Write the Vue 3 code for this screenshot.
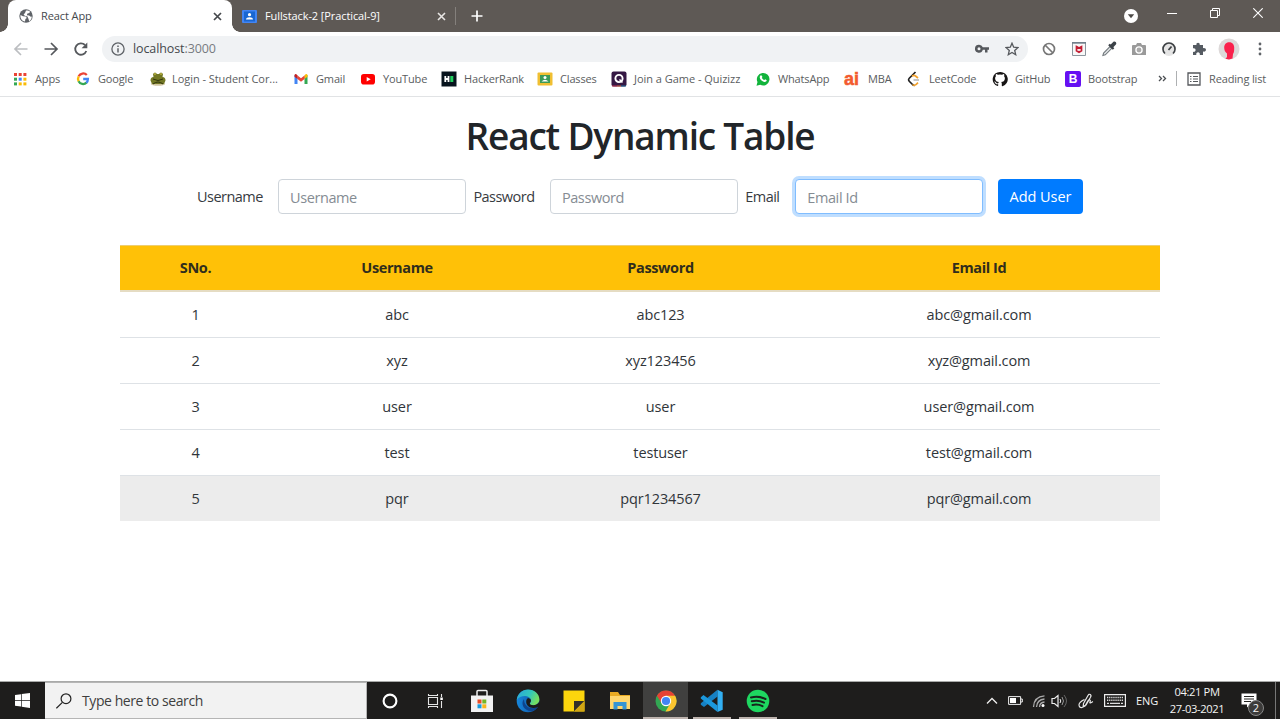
<script setup>
const columns = ['SNo.', 'Username', 'Password', 'Email Id']
const users = [
  ['1', 'abc', 'abc123', 'abc@gmail.com'],
  ['2', 'xyz', 'xyz123456', 'xyz@gmail.com'],
  ['3', 'user', 'user', 'user@gmail.com'],
  ['4', 'test', 'testuser', 'test@gmail.com'],
  ['5', 'pqr', 'pqr1234567', 'pqr@gmail.com']
]
const appDots = ['#ea4335', '#ea4335', '#ea4335', '#34a853', '#4285f4', '#fbbc05', '#34a853', '#fbbc05', '#fbbc05']
</script>

<template>
  <div class="screen">
    <header class="tabs">
      <div class="tab active">
        <svg class="fav" width="14" height="14" viewBox="0 0 14 14"><circle cx="7" cy="7" r="6.700" fill="#5f6368" /><path d="M1.500 6 4 7.200l2.800.2 1 1.600-1.400 1-.4 2.500C3 12.300.9 9 1.500 6zM7 1.500l2-.1 2 1.200-.6 1.500-2 .5-.6 1.600 2.300.2 1.600 1.400 1-.3c.2 2-1 4-2.500 4.700L9.500 10 8.500 7.500 5.800 6.800 4.600 5.400 6 4z" fill="#fff" /></svg>
        <span class="tab-title">React App</span>
        <svg class="close" width="9" height="9" viewBox="0 0 9 9"><path d="M1 1l7 7M8 1l-7 7" stroke="#45484c" stroke-width="1.700" /></svg>
      </div>
      <div class="tab idle">
        <svg class="fav2" width="15" height="13" viewBox="0 0 15 13"><rect width="15" height="13" rx="1" fill="#4285f4" /><rect x="2" y="1.500" width="11" height="10" fill="#1967d2" /><circle cx="7.500" cy="4.700" r="1.600" fill="#fff" /><path d="M4 9.500c0-3 7-3 7 0z" fill="#fff" /></svg>
        <span class="tab-title second">Fullstack-2 [Practical-9]</span>
        <svg class="close" width="9" height="9" viewBox="0 0 9 9"><path d="M1 1l7 7M8 1l-7 7" stroke="#e8e6e4" stroke-width="1.600" /></svg>
      </div>
      <svg class="plus" width="12" height="12" viewBox="0 0 12 12"><path d="M6 .5v11M.5 6h11" stroke="#fff" stroke-width="1.700" /></svg>
      <div class="window-controls">
        <svg width="14" height="14" viewBox="0 0 14 14"><circle cx="7" cy="7" r="7" fill="#fff" /><path d="M3.800 5.200h6.400L7 9.200z" fill="#4d4a47" /></svg>
        <svg class="wc" width="10" height="10" viewBox="0 0 10 10"><path d="M0 5.500h10" stroke="#fff" /></svg>
        <svg class="wc" width="10" height="10" viewBox="0 0 10 10"><path d="M.5 2.500h7v7h-7zM2.500 2.500v-2h7v7h-2" fill="none" stroke="#fff" /></svg>
        <svg class="wc" width="10" height="10" viewBox="0 0 10 10"><path d="M.3.300l9.400 9.400M9.700.300.300 9.700" stroke="#fff" stroke-width="1.100" /></svg>
      </div>
    </header>

    <nav class="toolbar">
      <svg width="16" height="16" viewBox="0 0 16 16" fill="none" stroke="#bcbec1" stroke-width="1.700"><path d="M14.500 8H2.500M8 2 2 8l6 6" /></svg>
      <svg width="16" height="16" viewBox="0 0 16 16" fill="none" stroke="#55585c" stroke-width="1.700"><path d="M1.500 8h12M8 2l6 6-6 6" /></svg>
      <svg width="16" height="16" viewBox="0 0 16 16"><path d="M13.300 10A5.700 5.700 0 1 1 12 4" fill="none" stroke="#55585c" stroke-width="1.800" /><path d="M14.300 1.500v5.700H8.600z" fill="#55585c" /></svg>
      <div class="address">
        <svg width="14" height="14" viewBox="0 0 14 14"><circle cx="7" cy="7" r="6.100" fill="none" stroke="#5f6368" stroke-width="1.300" /><path d="M7 6.200v4.200M7 3.400v1.500" stroke="#5f6368" stroke-width="1.500" /></svg>
        <span class="url">localhost<span class="port">:3000</span></span>
        <svg class="key" width="14" height="10" viewBox="0 0 14 10"><path d="M4 .8a4 4 0 1 0 3.800 5H10v2.700h2.500V5.800H14V3.300H7.800A4 4 0 0 0 4 .8zm0 2.500a1.500 1.500 0 1 1 0 3 1.500 1.500 0 0 1 0-3z" fill="#55585c" /></svg>
        <svg class="star" width="14" height="14" viewBox="0 0 14 14"><path d="m7 1.200 1.700 4 4.300.4-3.300 2.900 1 4.200L7 10.500l-3.700 2.200 1-4.200L1 5.600l4.300-.4z" fill="none" stroke="#55585c" stroke-width="1.300" /></svg>
      </div>
      <div class="extensions">
        <svg width="16" height="16" viewBox="0 0 16 16"><circle cx="8" cy="8" r="5.500" fill="none" stroke="#777" stroke-width="1.700" /><path d="m4 4 8 8" stroke="#777" stroke-width="1.700" /></svg>
        <svg width="16" height="16" viewBox="0 0 16 16"><path d="M1.500 1.500h13v13h-13z" fill="#f8f8f8" stroke="#8c969e" /><path d="M1 1h14v1.700H1z" fill="#71808b" /><path d="M5.500 5.600 8 7l2.500-1.400v4.200L8 11.200 5.500 9.800z" fill="#f7e6e8" stroke="#c31d33" stroke-width="1.700" /></svg>
        <svg width="16" height="16" viewBox="0 0 16 16"><path d="m9 5.500 1.800 1.800-6.500 6.500-2.400.7.700-2.500z" fill="#e3e6e8" stroke="#737a7e" stroke-width="1.100" /><path d="m7.200 4.200 1.500-1.500 1 .9L12.200 1C14-.4 16.200 1.800 14.900 3.600L12.300 6.200l1 1-1.500 1.500z" fill="#3c4248" /></svg>
        <svg width="16" height="16" viewBox="0 0 16 16"><path d="M2 4h3l1-2h4l1 2h3q1 0 1 1v9H1V5q0-1 1-1z" fill="#9a9a9a" /><circle cx="8" cy="9" r="3.100" fill="#aaa" stroke="#fff" stroke-width="1.300" /></svg>
        <svg width="16" height="16" viewBox="0 0 16 16"><circle cx="8" cy="8" r="7" fill="#e5e5e5" /><path d="M4 12.500a6 6 0 1 1 8 0" fill="none" stroke="#3d4144" stroke-width="1.600" /><path d="m7.500 9 3-3.500" stroke="#3d4144" stroke-width="1.700" /></svg>
        <svg width="16" height="16" viewBox="0 0 16 16"><path d="M2 4h3.500C4.600 1 9.400 1 8.700 4H12v3.200c4-1 4 4.400 0 3.400V14H8.800c.8-3.600-4.300-3.600-3.500 0H2v-3.200c3.500.8 3.500-4.300 0-3.500z" fill="#555b62" /></svg>
        <svg class="avatar" width="22" height="22" viewBox="0 0 22 22"><circle cx="11" cy="11" r="10.500" fill="#ddd9d9" /><path d="M6.200 9.500c0-7 10-7 10 0 0 3 0 5-1.200 6.500l-.5 4.500L11 21.500l-3.500-.8L9 19v-3.500C7 14 6.200 12 6.200 9.500z" fill="#fa214c" /></svg>
        <svg width="4" height="14" viewBox="0 0 4 14" fill="#5f6368"><circle cx="2" cy="2" r="1.400" /><circle cx="2" cy="7" r="1.400" /><circle cx="2" cy="12" r="1.400" /></svg>
      </div>
    </nav>

    <nav class="bookmarks">
      <div class="bm"><svg width="16" height="16" viewBox="0 0 16 16"><rect v-for="(c, i) in appDots" :key="i" :x="2 + (i % 3) * 4.700" :y="2 + Math.floor(i / 3) * 4.700" width="3" height="3" :fill="c" /></svg><span>Apps</span></div>
      <div class="bm"><svg width="16" height="16" viewBox="0 0 16 16" fill="none" stroke-width="2.300"><path d="M11.800 4A5 5 0 0 0 3.700 5.300" stroke="#ea4335" /><path d="M3.700 5.300a5 5 0 0 0 0 5" stroke="#fbbc05" /><path d="M3.600 10.300A5 5 0 0 0 11.500 11.700" stroke="#34a853" /><path d="M8.200 8h4.700q0 2.500-1.600 3.900" stroke="#4285f4" /></svg><span>Google</span></div>
      <div class="bm"><svg width="16" height="16" viewBox="0 0 16 16"><ellipse cx="8" cy="13" rx="7" ry="1.700" fill="#d0c5a0" /><path d="M3 3q2-3 4 0h2q2-3 4 0l-.5 3q3 0 3 3.500L14 13H2L.5 9.500Q.5 6 3.500 6z" fill="#727724" /><path d="M3 8q5 3 10 0M3 13q5-4 10 0" stroke="#30330f" fill="none" /><circle cx="5" cy="3" r=".8" fill="#e8d950" /><circle cx="11" cy="3" r=".8" fill="#e8d950" /></svg><span class="login">Login - Student Cor...</span></div>
      <div class="bm"><svg width="16" height="16" viewBox="0 0 16 16"><path d="M1.500 4v9H4.500V5.500z" fill="#4285f4" /><path d="M11.500 5.500V13h3V4z" fill="#34a853" /><path d="M11.500 4.500V8l3-2.200V4q-1-2-3 .500z" fill="#fbbc05" /><path d="m4.500 4.500 3.500 2.700 3.500-2.700V8L8 10.700 4.500 8z" fill="#ea4335" /><path d="M1.500 4q1-2 3 .500V8l-3-2.200z" fill="#c5221f" /></svg><span>Gmail</span></div>
      <div class="bm"><svg width="16" height="16" viewBox="0 0 16 16"><rect x="1" y="3" width="14" height="10.500" rx="2.800" fill="#f00" /><path d="m6.700 5.900 4 2.300-4 2.300z" fill="#fff" /></svg><span>YouTube</span></div>
      <div class="bm"><svg width="16" height="16" viewBox="0 0 16 16"><path d="M.5.500h15v15H.5z" fill="#07131d" /><path d="M4.300 5v6M7.500 5v6M4 8h4" stroke="#fff" stroke-width="1.800" /><path d="M9.300 5h3v6h-3z" fill="#1fd15e" /></svg><span>HackerRank</span></div>
      <div class="bm"><svg width="16" height="16" viewBox="0 0 16 16"><rect x=".5" y="1.500" width="15" height="13" rx="1" fill="#f0bf32" /><path d="M3 4h10v8H3z" fill="#3c9a58" /><circle cx="8" cy="6.500" r="1.500" fill="#fff" /><path d="M4.500 10.500q3.500-3.500 7 0z" fill="#fff" /></svg><span>Classes</span></div>
      <div class="bm"><svg width="16" height="16" viewBox="0 0 16 16"><rect x=".5" y=".5" width="15" height="15" rx="2" fill="#351844" /><circle cx="8" cy="7.500" r="3.600" fill="none" stroke="#fff" stroke-width="1.900" /><path d="m8.500 8.500 3 3" stroke="#fff" stroke-width="1.500" /><path d="M1 15h5" stroke="#bf3556" /><path d="M6 15h4" stroke="#d5623d" /><path d="M10 15h5" stroke="#236f9d" /></svg><span class="quiz">Join a Game - Quizizz</span></div>
      <div class="bm"><svg width="16" height="16" viewBox="0 0 16 16"><path d="M1.500 14.800 2.500 11A6.300 6.300 0 1 1 5.200 13.800z" fill="#12b43c" /><path d="M5 5q1-1.600 2 0l.4 1.100-.6 1q1 1.500 2.600 2l.8-.8 1.600.9q-.3 2-2.500 1.800Q5 9.800 4.700 6.300z" fill="#fff" /></svg><span>WhatsApp</span></div>
      <div class="bm"><span class="ai">ai</span><span>MBA</span></div>
      <div class="bm"><svg width="16" height="16" viewBox="0 0 16 16" fill="none" stroke-width="1.700"><path d="M9.500 1 3.500 7q-1.800 1.800 0 3.500l3 3q1 .9 2 .8" stroke="#222" /><path d="m6.500 13.500q1.700 1.700 3.500 0l2-1.800M6 5.200q2-1.400 3.500-.2l2.500 2" stroke="#f3a22d" /><path d="M7.500 9H13" stroke="#bbb" /></svg><span>LeetCode</span></div>
      <div class="bm"><svg width="16" height="16" viewBox="0 0 16 16"><path d="M8 .9a7.300 7.300 0 0 0-2.400 14.200c.5.100.6-.2.600-.5v-1.400c-2.200.5-2.700-.8-2.700-.8-.4-1-.9-1.200-.9-1.200-.8-.6.100-.6.100-.6.900.1 1.300.9 1.300.9.800 1.200 2 .9 2.300.7q.1-.7.600-1.100c-1.900-.2-3.800-1-3.800-3.900q0-1.200.8-2-.4-1 .1-2.200s.7-.2 2.100.8a7 7 0 0 1 3.800 0c1.500-1 2.100-.8 2.100-.8q.5 1.200.1 2.200.8.800.8 2c0 2.900-1.900 3.700-3.700 3.900.4.300.6.900.6 1.600v2c0 .3.200.6.700.5A7.300 7.300 0 0 0 8 .9z" fill="#171515" /></svg><span>GitHub</span></div>
      <div class="bm"><span class="bs">B</span><span>Bootstrap</span></div>
      <svg class="more" width="9" height="7" viewBox="0 0 9 7" fill="none" stroke="#4b4e52" stroke-width="1.300"><path d="m1 1 2.500 2.500L1 6M5 1l2.500 2.500L5 6" /></svg>
      <div class="reading">
        <svg width="14" height="14" viewBox="0 0 14 14"><path d="M1 1h12v12H1z" fill="none" stroke="#55585c" stroke-width="1.300" /><path d="M3 4.500h1.500M6 4.500h5M3 7h1.500M6 7h5M3 9.500h1.500M6 9.500h5" stroke="#55585c" stroke-width="1.200" /></svg>
        <span>Reading list</span>
      </div>
    </nav>

    <main>
      <h1>React Dynamic Table</h1>
      <form class="user-form" @submit.prevent>
        <label class="lu">Username</label><input placeholder="Username" />
        <label class="lp">Password</label><input placeholder="Password" />
        <label class="le">Email</label><input class="focused" placeholder="Email Id" />
        <button>Add User</button>
      </form>
      <table>
        <colgroup><col class="c1" /><col class="c2" /><col class="c3" /><col class="c4" /></colgroup>
        <thead><tr><th v-for="c in columns" :key="c">{{ c }}</th></tr></thead>
        <tbody>
          <tr v-for="u in users" :key="u[0]" :class="{ hovered: u[0] === '5' }"><td v-for="(v, i) in u" :key="i">{{ v }}</td></tr>
        </tbody>
      </table>
    </main>

    <footer class="taskbar">
      <div class="start"><svg width="15" height="15" viewBox="0 0 15 15" fill="#fff"><path d="M0 2 6 1.200V7H0zM6.700 1.100 15 0v7H6.700zM0 7.700h6v5.900l-6-.8zM6.700 7.700H15V15l-8.300-1.200z" /></svg></div>
      <div class="search">
        <svg width="16" height="16" viewBox="0 0 16 16" fill="none" stroke="#222" stroke-width="1.200"><circle cx="10" cy="5.700" r="4.900" /><path d="m6.400 9.300-6 6" /></svg>
        <span>Type here to search</span>
      </div>
      <div class="task"><svg width="16" height="16" viewBox="0 0 16 16"><circle cx="8" cy="8" r="6.400" fill="none" stroke="#fff" stroke-width="2.100" /></svg></div>
      <div class="task"><svg class="taskview" width="18" height="16" viewBox="0 0 18 16" fill="none" stroke="#e5e5e5" stroke-width="1.100"><path d="M2.500 4.500h9v7h-9zM2.500 1v1.500h9V1M2.500 15v-1.500h9V15M15.500 1v3M15.500 8v7" /><path d="M14.300 4.500h2.500V7h-2.500z" fill="#fff" stroke="none" /></svg></div>
      <div class="task"><svg width="24" height="26" viewBox="0 0 24 26"><path d="M7 8V3.500q0-1 1-1h8q1 0 1 1V8" fill="none" stroke="#eee" stroke-width="1.500" /><path d="M1 7.500h22V24H1z" fill="#f2f2f2" /><path d="M7.500 11.500h4v4h-4z" fill="#e84b25" /><path d="M12.300 11.500h4v4h-4z" fill="#72b626" /><path d="M7.500 16.300h4v4h-4z" fill="#159bde" /><path d="M12.300 16.300h4v4h-4z" fill="#f8b51c" /></svg></div>
      <div class="task">
        <svg width="24" height="24" viewBox="0 0 24 24"><defs><linearGradient id="edge-top" x1="0" x2="1" y1="0" y2=".4"><stop stop-color="#2aa4de" /><stop offset=".6" stop-color="#32c8bb" /><stop offset="1" stop-color="#75df61" /></linearGradient><linearGradient id="edge-body" x1="0" x2="1"><stop stop-color="#1687dc" /><stop offset="1" stop-color="#104d9c" /></linearGradient></defs><circle cx="12" cy="12" r="11.300" fill="url(#edge-body)" /><path d="M.8 11C1.300 4.800 6.300.6 12 .6c6.600 0 11.400 4.800 11.400 9.700 0 4-3.200 6.200-6.600 6.200-2.500 0-3.800-1.100-2.700-2.300 2.700-3.300-.5-7.200-5.100-7.200C5.500 7 2.300 8.300.8 11z" fill="url(#edge-top)" /><path d="M8 10c-4 5 .5 12 7 12 4 0 6-2.500 7-4.500-6 4-14 1-14-7.500z" fill="#0d448e" /><path d="M12 9c-3 2-2.600 8.500 4 9.800 3 .6 5.500-.5 7-1.500l1.500-3-1.500-1c-2.200 3.800-9.700 3.500-9.200.7 2.200-2.500 1-4.200-1.800-5z" fill="#1c1b1a" /></svg>
      </div>
      <div class="task"><svg width="22" height="22" viewBox="0 0 22 22"><path d="M.5.500h21v21H.5z" fill="#fcd50d" /><path d="M11 11h10.500L11 21.500z" fill="#333029" /><path d="M21.500 11v10.500H11z" fill="#d2a613" /></svg></div>
      <div class="task"><svg width="22" height="20" viewBox="0 0 22 20"><path d="M1 1h8l2 3h10v13H1z" fill="#e9aa22" /><path d="M1 5h20v13H1z" fill="#ffd66d" /><path d="M4.500 11h13v7.500h-4V15h-5v3.500h-4z" fill="#3594d3" /></svg></div>
      <div class="task current"><svg width="22" height="22" viewBox="0 0 22 22"><circle cx="11" cy="11" r="10.500" fill="#32a753" /><path d="M1.900 5.700A10.500 10.500 0 0 1 20.100 5.700L11 7.200l-4.200 6.300z" fill="#e64234" /><path d="M11 5.700h9.100A10.500 10.500 0 0 1 10.500 21.500L15.500 13z" fill="#fbc52f" /><circle cx="11" cy="11" r="5.200" fill="#fff" /><circle cx="11" cy="11" r="4.100" fill="#4285f4" /></svg></div>
      <div class="task open"><svg width="24" height="24" viewBox="0 0 24 24"><path d="M17.500.8V7.500L4 18 .8 15.800v-1.600z" fill="#1681c4" /><path d="M.8 8.200 3.500 6l14 10.500V23L.8 9.500z" fill="#1b98dc" /><path d="m17.500.8 5.200 2.400v17.600L17.500 23z" fill="#32aff2" /></svg></div>
      <div class="task open"><svg width="24" height="24" viewBox="0 0 24 24"><circle cx="12" cy="12" r="11.300" fill="#1ed760" /><path d="M5 8.500q7.500-2 14.500 1.500M5.800 12.300q6.500-1.700 12.200 1.300M6.500 16q5.500-1.200 10 1.200" fill="none" stroke="#17251c" stroke-width="2" stroke-linecap="round" /></svg></div>

      <div class="tray">
        <svg class="up" width="12" height="8" viewBox="0 0 12 8"><path d="m1 6.500 5-5 5 5" fill="none" stroke="#eee" stroke-width="1.300" /></svg>
        <svg class="battery" width="15" height="9" viewBox="0 0 15 9"><path d="M.6.600h12v7.800h-12zM12.600 3h1.700v3h-1.700" fill="none" stroke="#eee" /><path d="M2 2h6v5H2z" fill="#fff" /></svg>
        <svg class="wifi" width="14" height="14" viewBox="0 0 14 14" fill="none"><path d="M1.500 13Q2 2.500 12.500 1.800M4.500 13q.5-7.300 8-8M7.500 13q.3-4.600 5-5" stroke="#aaa" stroke-width="1.300" /><circle cx="11" cy="11.500" r="1.500" fill="#fff" /></svg>
        <svg class="sound" width="17" height="14" viewBox="0 0 17 14" fill="none"><path d="M1 4.500h2.500L7 1.500v11l-3.500-3H1z" stroke="#eee" stroke-width="1.200" /><path d="M9 5q1.500 2 0 4" stroke="#eee" /><path d="M11 3q3 4 0 8" stroke="#999" /><path d="M13 1q5 6 0 12" stroke="#666" /></svg>
        <svg class="pen" width="16" height="16" viewBox="0 0 16 16" fill="none" stroke="#e8e8e8" stroke-width="1.200"><path d="m5.500 10.500 4.500-8q1-1.800 2.300-1t.2 2.800L8 12l-2.800 1.500zM6.500 6.500Q1.200 9 1 11.800q0 3 3 2.700l3-1.500 2.800-5q1-1.500 2-1t.1 2.200q-.4 1.800 3-.700" /></svg>
        <svg class="keyboard" width="22" height="13" viewBox="0 0 22 13"><path d="M.6.600h20.800v11.800H.6z" fill="none" stroke="#eee" stroke-width="1.200" /><path d="M3 3.500h16M3 6.200h16" stroke="#ddd" stroke-width="1.400" stroke-dasharray="1.300 .8" /><path d="M3 9.300h2M6 9.300h10M17 9.300h2" stroke="#ddd" stroke-width="1.200" /></svg>
        <span class="lang">ENG</span>
        <div class="clock"><span>04:21 PM</span><span>27-03-2021</span></div>
        <div class="notice"><svg width="16" height="15" viewBox="0 0 16 15"><path d="M.5.500h15v11h-6L6 14.500v-3H.5z" fill="#fff" /><path d="M3 3.500h10M3 6h10M3 8.500h7" stroke="#242321" stroke-width="1.100" /></svg><span class="count">2</span></div>
      </div>
      <div class="desktop-edge"></div>
    </footer>
  </div>
</template>

<style>
body { margin: 0; overflow: hidden; background: #fff; }
</style>

<style scoped>
* { box-sizing: border-box; }
svg { display: block; flex: none; }
.screen { width: 1280px; height: 719px; display: flex; flex-direction: column; overflow: hidden; font-family: "Open Sans", "Noto Sans", sans-serif; color: #212529; background: #fff; }
.tabs { height: 32px; flex: none; display: flex; align-items: center; background: #5e5955; padding-left: 8px; color: #fff; }
.tab { display: flex; align-items: center; height: 32px; white-space: nowrap; font-size: 11px; letter-spacing: -.1px; }
.tab-title { margin: -1px 0 0 8px; }
.active { position: relative; width: 224px; padding: 0 10px 0 11px; background: #fff; border-radius: 8px 8px 0 0; color: #45484c; }
.active::before, .active::after { content: ""; position: absolute; bottom: 0; width: 8px; height: 8px; }
.active::before { left: -8px; background: radial-gradient(circle at 0 0, transparent 7.500px, #fff 8px); }
.active::after { right: -8px; background: radial-gradient(circle at 100% 0, transparent 7.500px, #fff 8px); }
.close { margin-left: auto; }
.idle { width: 224px; height: 18px; padding: 0 9px 0 10px; border-right: 1px solid #84807c; }
.plus { margin-left: 15px; }
.window-controls { margin-left: auto; display: flex; align-items: center; padding-right: 17px; }
.window-controls .wc { margin: -6px 0 0 33px; }
.window-controls .wc:nth-child(2) { margin-left: 29px; }
.toolbar { height: 34px; flex: none; display: flex; align-items: center; padding-left: 13px; gap: 14px; }
.address { width: 926px; height: 26px; margin-left: -1px; padding: 0 9px; display: flex; align-items: center; border-radius: 13px; background: #f0f2f4; }
.url { margin: -1px 0 0 8px; font-size: 12.500px; letter-spacing: -.1px; color: #45484c; }
.port { color: #777b80; }
.key { margin-left: auto; }
.star { margin-left: 16px; }
.extensions { display: flex; align-items: center; gap: 14px; margin-left: -1px; }
.extensions .avatar { margin: 0 4px 0 -3px; }
.bookmarks { height: 31px; flex: none; display: grid; grid-template-columns: 63px 75px 143px 67px 81px 96px 74px 144px 89px 62px 86px 73px 93px 18px 1fr; align-items: center; padding: 0 0 5px 12px; border-bottom: 1px solid #e1e3e5; font-size: 11px; letter-spacing: -.15px; color: #5a5d60; }
.bm { display: flex; align-items: center; gap: 7px; white-space: nowrap; }
.bm span, .reading span { margin-top: -1px; }
.login { margin-left: -1px; letter-spacing: -.05px; }
.quiz { letter-spacing: -.03px; }
.bm .ai { width: 17px; margin-top: 2px; font: 700 18px/15px "Liberation Sans", sans-serif; -webkit-text-stroke: .5px #f35b2f; letter-spacing: 0; color: #f35b2f; }
.bm .bs { width: 16px; height: 16px; margin-top: 0; display: grid; place-items: center; border-radius: 2px; font: 700 12px/16px "Liberation Sans", sans-serif; color: #fff; background: #6610f2; }
.reading { height: 15px; display: flex; align-items: center; gap: 8px; border-left: 1px solid #aeb0b2; padding-left: 10px; white-space: nowrap; }
main { height: 584px; flex: none; padding: 11px 120px 0; }
h1 { height: 54px; margin: 0; text-align: center; font-size: 37px; line-height: 55px; font-weight: 550; letter-spacing: -1.200px; white-space: nowrap; }
.user-form { height: 35px; margin: 17px 0 31px 77px; display: flex; align-items: center; font-size: 14.500px; }
label { white-space: nowrap; letter-spacing: -.53px; color: #373b3f; }
.lu { width: 81px; }
.lp { width: 76.500px; }
.le { width: 50px; }
input { width: 188px; height: 35px; margin: 0 7.400px 0 0; padding: 2px 11px 0; border: 1px solid #ced4da; border-radius: 4px; outline: 0; font: inherit; letter-spacing: -.4px; background: #fff; }
input::placeholder { color: #858c93; opacity: 1; }
.focused { border-color: #80bdff; box-shadow: 0 0 0 3px #bfdeff; margin-right: 14.700px; }
button { width: 85px; height: 35px; padding: 0; border: 0; border-radius: 4px; background: #007bff; color: #fff; font: inherit; letter-spacing: -.05px; white-space: nowrap; }
table { width: 1040px; table-layout: fixed; border-collapse: separate; border-spacing: 0; text-align: center; font-size: 14.500px; letter-spacing: -.12px; }
.c1 { width: 151px; } .c2 { width: 252px; } .c3 { width: 275px; } .c4 { width: 362px; }
th { height: 47px; padding: 0 0 1px; background: #ffc107; border-top: 1px solid #edce72; border-bottom: 2px solid #e5dcc3; font-weight: 700; letter-spacing: -.38px; color: #302d1c; }
td { height: 46px; padding: 0; border-bottom: 1px solid #dee2e6; color: #30353a; }
tr:last-child td { height: 45px; }
.hovered td { background: #ececec; border-color: #ececec; }
.taskbar { height: 38px; flex: none; display: flex; background: #1e1d1c; border-top: 1px solid #a9aaa9; color: #f4f4f4; }
.start { width: 45px; display: grid; place-items: center; }
.search { width: 322px; display: flex; align-items: center; gap: 10px; padding-left: 11px; background: #f2f2f2; border: solid #b5b5b5; border-width: 1px 1px 1px 0; color: #3e3e3e; font-size: 14px; letter-spacing: -.42px; white-space: nowrap; }
.task { width: 46px; display: grid; place-items: center; position: relative; }
.taskview { margin-right: 2px; }
.current { width: 45px; margin-right: 1px; background: #40403f; }
.current::after, .open::after { content: ""; position: absolute; left: 4px; right: 4px; bottom: 0; height: 2px; background: #bdb3ae; }
.current::after { left: 0; right: 0; }
.tray { margin-left: auto; display: flex; align-items: center; white-space: nowrap; }
.battery { margin-left: 10px; }
.wifi { margin-left: 9px; }
.sound { margin-left: 5px; }
.pen { margin-left: 10px; }
.keyboard { margin-left: 10px; }
.lang { width: 33px; margin: -1px 0 0 10px; font-size: 11px; letter-spacing: -.1px; }
.clock { width: 56px; margin-top: -2px; display: flex; flex-direction: column; align-items: center; font-size: 11.200px; line-height: 17px; letter-spacing: -.38px; }
.notice { position: relative; margin-left: 16px; }
.count { position: absolute; left: 7px; top: 7px; width: 16px; height: 16px; border: 1px solid #888; border-radius: 50%; background: #3c3b3a; font-size: 11px; line-height: 14px; text-align: center; }
.desktop-edge { width: 5px; margin-left: 18px; border-left: 1px solid #777; }
</style>
